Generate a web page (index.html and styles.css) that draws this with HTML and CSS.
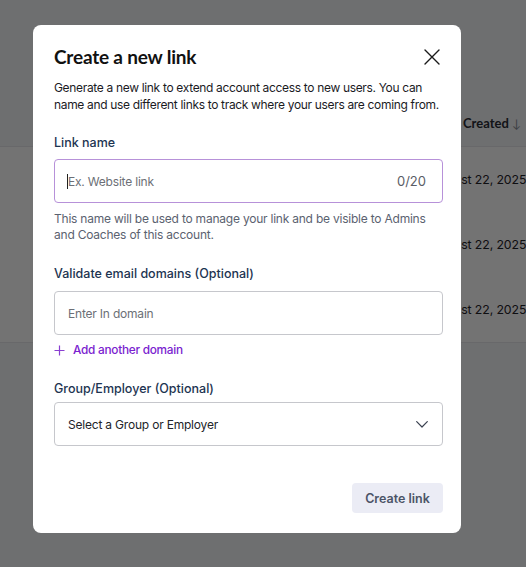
FILE: index.html
```html
<!DOCTYPE html>
<html lang="en">
<head>
<meta charset="utf-8">
<title>Create a new link</title>
<link rel="stylesheet" href="styles.css">
</head>
<body>
<div class="page">
  <div class="table-head">
    <span class="col-created">Created <span class="sort">↓</span></span>
  </div>
  <div class="table-body">
    <div class="row"><span class="cell-date">August 22, 2025</span></div>
    <div class="row"><span class="cell-date">August 22, 2025</span></div>
    <div class="row"><span class="cell-date">August 22, 2025</span></div>
  </div>
</div>
<div class="overlay"></div>
<div class="modal" role="dialog">
  <div class="modal-header">
    <h2 class="modal-title">Create a new link</h2>
    <button class="close" aria-label="Close">
      <svg width="16" height="16" viewBox="0 0 16 16"><path d="M1 1 L15 15 M15 1 L1 15" stroke="#1a1a1a" stroke-width="1.4" fill="none" stroke-linecap="round"/></svg>
    </button>
  </div>
  <p class="desc"><span class="line">Generate a new link to extend account access to new users. You can</span> <span class="line">name and use different links to track where your users are coming from.</span></p>

  <label class="label label-1">Link name</label>
  <div class="field field-active">
    <span class="caret"></span><span class="placeholder">Ex. Website link</span>
    <span class="counter">0/20</span>
  </div>
  <p class="helper">This name will be used to manage your link and be visible to Admins and Coaches of this account.</p>

  <label class="label label-2">Validate email domains (Optional)</label>
  <div class="field field-2"><span class="placeholder">Enter In domain</span></div>
  <div class="add-domain">
    <svg width="11" height="11" viewBox="0 0 11 11"><path d="M5.5 0.5 V10.5 M0.5 5.5 H10.5" stroke="#8a3fd1" stroke-width="1.2" fill="none"/></svg>
    <span>Add another domain</span>
  </div>

  <label class="label label-3">Group/Employer (Optional)</label>
  <div class="field field-3">
    <span class="select-text">Select a Group or Employer</span>
    <svg class="chevron" width="12" height="7" viewBox="0 0 12 7"><path d="M0.7 0.7 L6 6 L11.3 0.7" stroke="#3a4150" stroke-width="1.2" fill="none" stroke-linecap="round" stroke-linejoin="round"/></svg>
  </div>

  <div class="actions">
    <button class="btn-create">Create link</button>
  </div>
</div>
</body>
</html>
```
FILE: styles.css
```css
* { box-sizing: border-box; }
html, body { margin: 0; padding: 0; }
body {
  width: 526px;
  height: 567px;
  overflow: hidden;
  background: #f4f5f8;
  font-family: Inter, "Liberation Sans", sans-serif;
}
.page { padding-top: 100px; }
.table-head {
  height: 46px;
  display: flex;
  align-items: center;
  padding-left: 463px;
  white-space: nowrap;
}
.col-created {
  font-family: "Lato", "Liberation Sans", sans-serif;
  font-weight: 700;
  font-size: 13px;
  color: #2b2e36;
}
.sort { color: #8a8f99; font-weight: 400; font-size: 12px; }
.table-body {
  background: #ffffff;
  border-top: 1px solid #e6e7ec;
  border-bottom: 1px solid #e6e7ec;
}
.row {
  height: 65px;
  display: flex;
  align-items: center;
  padding-left: 431px;
  white-space: nowrap;
}
.cell-date { font-size: 12.3px; letter-spacing: -0.1px; color: #1f2229; }
.overlay {
  position: fixed;
  inset: 0;
  background: rgba(0, 0, 0, 0.55);
}
.modal {
  position: fixed;
  left: 33px;
  top: 25px;
  width: 428px;
  height: 508px;
  background: #ffffff;
  border-radius: 8px;
  padding: 20px 18px 20px 21px;
  display: flex;
  flex-direction: column;
}
.modal-header {
  display: flex;
  justify-content: space-between;
  align-items: center;
  height: 24px;
}
.modal-title {
  margin: 0;
  font-family: Lato, "Liberation Sans", sans-serif;
  font-weight: 700;
  font-size: 19px;
  line-height: 24px;
  letter-spacing: -0.2px;
  color: #111;
}
.close {
  border: 0;
  background: none;
  padding: 0;
  margin-right: 3px;
  width: 16px;
  height: 16px;
  display: flex;
}
.desc {
  margin: 10px 0 0;
  font-size: 12px;
  line-height: 17px;
  letter-spacing: -0.33px;
  color: #1b1b1f;
}
.desc .line { white-space: nowrap; }
.label {
  display: block;
  font-family: Inter, "Liberation Sans", sans-serif;
  font-weight: 500;
  font-size: 12.5px;
  line-height: 18px;
  color: #1d3451;
}
.label-1 { margin-top: 21px; }
.label-2 { margin-top: 22px; }
.label-3 { margin-top: 22px; }
.field {
  height: 44px;
  border: 1px solid #c6c7cc;
  border-radius: 4px;
  display: flex;
  align-items: center;
  padding: 0 14px 0 12px;
  font-size: 12px;
  letter-spacing: -0.2px;
}
.field-active { margin-top: 7px; border-color: #b791d9; }
.field-2 { margin-top: 8px; }
.field-3 { margin-top: 4px; justify-content: space-between; }
.caret {
  width: 1px;
  height: 15px;
  background: #222;
}
.placeholder { color: #6c6f76; }
.field-2 .placeholder, .select-text { padding-left: 1px; }
.counter { margin-left: auto; color: #5a5d66; font-size: 13px; letter-spacing: 0; padding-right: 2px; }
.helper {
  margin: 8px 0 0;
  font-size: 12px;
  line-height: 16px;
  letter-spacing: -0.22px;
  color: #5b6270;
}
.add-domain {
  margin-top: 7px;
  height: 16px;
  display: flex;
  align-items: center;
  gap: 8px;
  font-size: 11.8px;
  letter-spacing: -0.25px;
  color: #7a22cf;
  font-weight: 500;
}
.select-text { color: #222429; }
.actions {
  margin-top: 37px;
  display: flex;
  justify-content: flex-end;
}
.btn-create {
  width: 91px;
  height: 30px;
  border: 0;
  border-radius: 4px;
  background: #ebecf5;
  color: #4b5467;
  font-family: Inter, "Liberation Sans", sans-serif;
  font-weight: 600;
  font-size: 12.5px;
}
```
